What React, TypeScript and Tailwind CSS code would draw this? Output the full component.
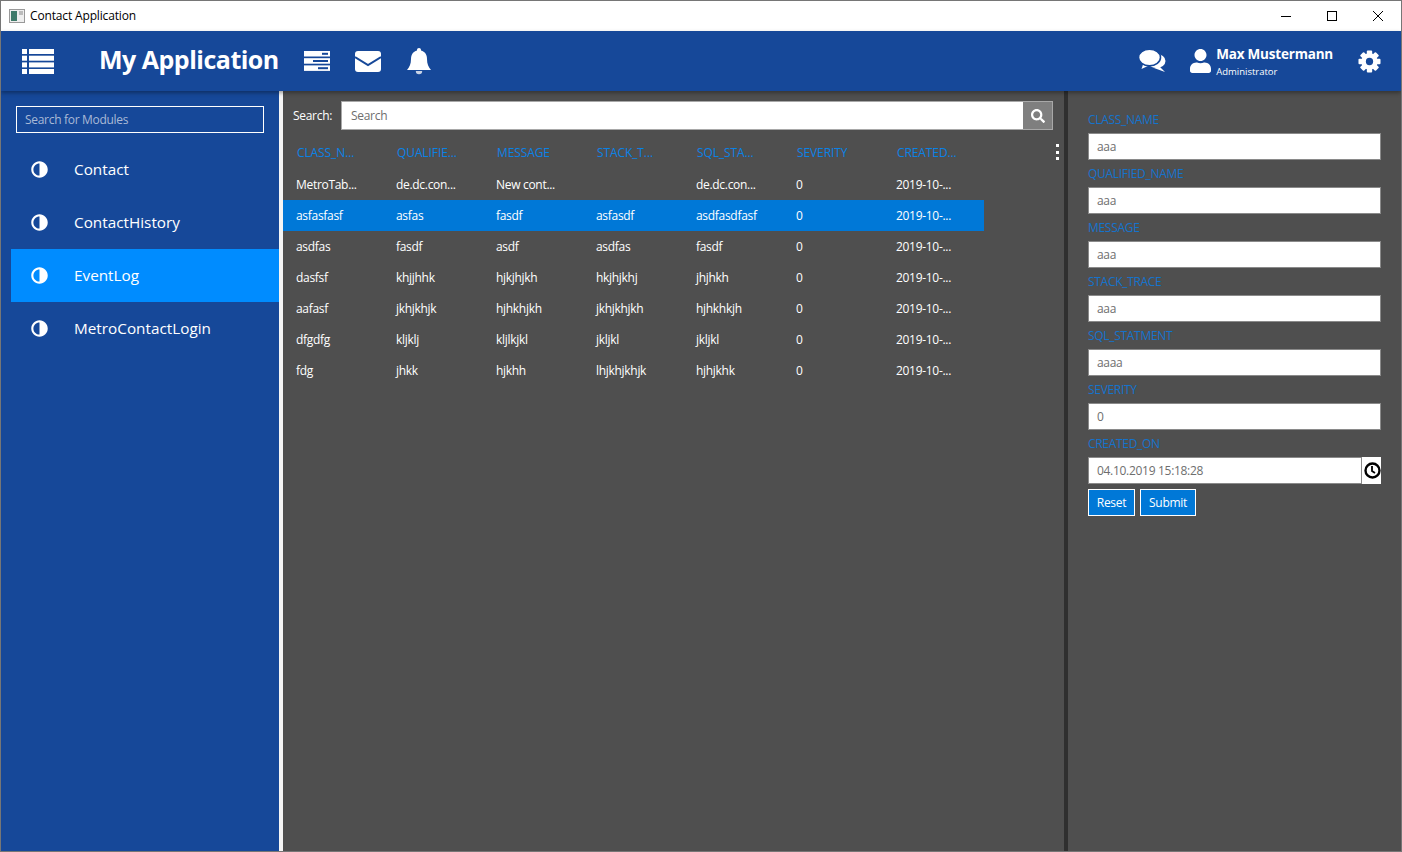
import { FaAdjust, FaSearch, FaUser } from 'react-icons/fa'

const modules = ['Contact', 'ContactHistory', 'EventLog', 'MetroContactLogin']

const columns = ['CLASS_N...', 'QUALIFIE...', 'MESSAGE', 'STACK_T...', 'SQL_STA...', 'SEVERITY', 'CREATED...']

const rows = [
    ['MetroTab...', 'de.dc.con...', 'New cont...', '', 'de.dc.con...', '0', '2019-10-...'],
    ['asfasfasf', 'asfas', 'fasdf', 'asfasdf', 'asdfasdfasf', '0', '2019-10-...'],
    ['asdfas', 'fasdf', 'asdf', 'asdfas', 'fasdf', '0', '2019-10-...'],
    ['dasfsf', 'khjjhhk', 'hjkjhjkh', 'hkjhjkhj', 'jhjhkh', '0', '2019-10-...'],
    ['aafasf', 'jkhjkhjk', 'hjhkhjkh', 'jkhjkhjkh', 'hjhkhkjh', '0', '2019-10-...'],
    ['dfgdfg', 'kljklj', 'kljlkjkl', 'jkljkl', 'jkljkl', '0', '2019-10-...'],
    ['fdg', 'jhkk', 'hjkhh', 'lhjkhjkhjk', 'hjhjkhk', '0', '2019-10-...'],
]

const fields = [
    { label: 'CLASS_NAME', value: 'aaa' },
    { label: 'QUALIFIED_NAME', value: 'aaa' },
    { label: 'MESSAGE', value: 'aaa' },
    { label: 'STACK_TRACE', value: 'aaa' },
    { label: 'SQL_STATMENT', value: 'aaaa' },
    { label: 'SEVERITY', value: '0' },
]

const HEADER_BLUE = '#164899'

const ListIcon = () => (
    <svg width="32" height="25" viewBox="0 0 32 25" fill="white" className="ml-[21px]">
        {[0, 6.7, 13.4, 20].map((y) => (
            <g key={y}>
                <rect x="0" y={y} width="5" height="5" />
                <rect x="7" y={y} width="25" height="5" />
            </g>
        ))}
    </svg>
)

const ServerIcon = () => (
    <svg width="26" height="20" viewBox="0 0 26 20" className="ml-[25px]">
        <rect x="0" y="0" width="26" height="5.5" fill="white" />
        <rect x="0" y="7.2" width="26" height="5.5" fill="white" />
        <rect x="0" y="14.4" width="26" height="5.5" fill="white" />
        <rect x="18" y="1.8" width="6" height="2" fill={HEADER_BLUE} />
        <rect x="9" y="9" width="15" height="2" fill={HEADER_BLUE} />
        <rect x="14" y="16.2" width="10" height="2" fill={HEADER_BLUE} />
    </svg>
)

const MailIcon = () => (
    <svg width="26" height="21" viewBox="0 0 26 21" className="ml-[25px]">
        <rect x="0" y="0" width="26" height="21" rx="3" fill="white" />
        <path d="M0 6 L13 14 L26 6" fill="none" stroke={HEADER_BLUE} strokeWidth="2" />
    </svg>
)

const BellIcon = () => (
    <svg width="24" height="27" viewBox="0 0 24 27" fill="white" className="ml-[26px]">
        <path d="M12 0c1.2 0 2 .9 2 2v.6C18 3.6 20 7 20 11c0 5 1.5 8 4 11H0c2.5-3 4-6 4-11 0-4 2-7.4 6-8.4V2c0-1.1.8-2 2-2z" />
        <path d="M8.8 23a3.2 3.2 0 0 0 6.4 0z" fill="#c9d3e6" />
    </svg>
)

const ChatIcon = () => (
    <svg width="27" height="24" viewBox="0 0 27 24" fill="white">
        <ellipse cx="17.5" cy="12" rx="9" ry="7" />
        <path d="M20 17 L26 23 L15 19z" />
        <path d="M4.5 14 L2.5 20 L11 16z" />
        <ellipse cx="10.5" cy="8.5" rx="11" ry="8.2" stroke={HEADER_BLUE} strokeWidth="1.6" />
    </svg>
)

const GearIcon = () => (
    <svg width="23" height="23" viewBox="0 0 24 24" fill="white" className="ml-[25px] mr-[20px]">
        {[0, 45, 90, 135].map((deg) => (
            <rect key={deg} x="9.2" y="0.5" width="5.6" height="23" rx="1" transform={`rotate(${deg} 12 12)`} />
        ))}
        <circle cx="12" cy="12" r="8.5" />
        <circle cx="12" cy="12" r="3.8" fill={HEADER_BLUE} />
    </svg>
)

const ClockIcon = () => (
    <svg width="17" height="17" viewBox="0 0 17 17" fill="none" stroke="black">
        <circle cx="8.5" cy="8.5" r="7" strokeWidth="2.4" />
        <path d="M8 4 V9 L11 11" strokeWidth="1.8" />
    </svg>
)

const App = () => {
    return (
        <div className="w-[1402px] h-[852px] flex flex-col overflow-hidden border border-[#767676] bg-white font-['Open_Sans','Noto_Sans',sans-serif] text-[12px] tracking-[-0.3px]">
            <div className="h-[30px] shrink-0 flex items-center bg-white text-black">
                <svg width="16" height="14" viewBox="0 0 16 14" className="ml-[8px] mr-[5px]">
                    <rect x="0.5" y="0.5" width="15" height="13" fill="#eee" stroke="#999" />
                    <rect x="2" y="2" width="6" height="10" fill="#3f7a6a" />
                    <rect x="10" y="2" width="4" height="4" fill="#bbb" />
                </svg>
                <span className="tracking-[-0.15px]">Contact Application</span>
                <div className="ml-auto flex items-center">
                    <div className="w-[46px] flex justify-center"><div className="w-[10px] h-px bg-black" /></div>
                    <div className="w-[46px] flex justify-center"><div className="w-[10px] h-[10px] border border-black" /></div>
                    <svg width="46" height="12" viewBox="0 0 46 12" stroke="black">
                        <path d="M18 1 L28 11 M28 1 L18 11" />
                    </svg>
                </div>
            </div>

            <div className="h-[60px] shrink-0 flex items-center bg-[#164899] text-white shadow-[0_2px_4px_rgba(0,0,0,0.35)] z-10">
                <ListIcon />
                <span className="ml-[45px] w-[180px] pb-[2px] text-[25px] font-bold tracking-[-0.5px] whitespace-nowrap">My Application</span>
                <ServerIcon />
                <MailIcon />
                <BellIcon />
                <div className="ml-auto flex items-center">
                    <ChatIcon />
                    <FaUser className="ml-[24px] w-[21px] h-[24px]" />
                    <div className="ml-[5px] mt-[2px] flex flex-col">
                        <span className="text-[13.5px] font-bold leading-[18px] tracking-[-0.2px]">Max Mustermann</span>
                        <span className="text-[9.5px] leading-[14px] mt-[2px] tracking-[0px]">Administrator</span>
                    </div>
                    <GearIcon />
                </div>
            </div>

            <div className="flex-1 flex min-h-0">
                <div className="w-[278px] shrink-0 bg-[#164899] text-white pt-[15px]">
                    <div className="ml-[15px] w-[248px] h-[27px] flex items-center border border-white pl-[8px] text-[#a9b9d6]">
                        Search for Modules
                    </div>
                    <div className="mt-[10px] flex flex-col">
                        {modules.map((name) => (
                            <div
                                key={name}
                                className={`h-[53px] flex items-center ml-[10px] pl-[20px] ${name === 'EventLog' ? 'bg-[#008cff]' : ''}`}
                            >
                                <FaAdjust className="w-[17px] h-[17px] scale-x-[-1]" />
                                <span className="ml-[26px] text-[15.3px] tracking-[0px]">{name}</span>
                            </div>
                        ))}
                    </div>
                </div>

                <div className="w-[4px] shrink-0 bg-[#f5f5f5]" />

                <div className="w-[781px] shrink-0 bg-[#4f4f4f] text-white relative">
                    <div className="h-[39px] pt-[10px] flex items-center">
                        <span className="ml-[10px] w-[48px]">Search:</span>
                        <div className="h-[29px] w-[712px] flex border border-[#a8a8a8] bg-white">
                            <span className="flex-1 pl-[9px] text-[#6e6e6e] leading-[27px]">Search</span>
                            <div className="w-[29px] flex items-center justify-center bg-[#7f7f7f]">
                                <FaSearch className="w-[14px] h-[14px] text-white" />
                            </div>
                        </div>
                    </div>
                    <div className="w-[701px] mt-[8px]">
                        <div className="h-[31px] pb-[1px] flex items-center text-[#0a82e6] tracking-[-0.1px]">
                            {columns.map((c) => (
                                <div key={c} className="w-[100px] pl-[14px]">{c}</div>
                            ))}
                        </div>
                        {rows.map((r, i) => (
                            <div key={i} className={`h-[31px] flex items-center ${i === 1 ? 'bg-[#0078d7]' : ''}`}>
                                {r.map((cell, j) => (
                                    <div key={j} className="w-[100px] pl-[13px] whitespace-nowrap">{cell}</div>
                                ))}
                            </div>
                        ))}
                    </div>
                    <div className="absolute left-[773px] top-[53px] flex flex-col gap-[3.5px]">
                        <div className="w-[3px] h-[3px] bg-white" />
                        <div className="w-[3px] h-[3px] bg-white" />
                        <div className="w-[3px] h-[3px] bg-white" />
                    </div>
                </div>

                <div className="w-[4px] shrink-0 bg-[#2f2f2f]" />

                <div className="flex-1 bg-[#4f4f4f] pt-[20px] pl-[20px] pr-[20px]">
                    {fields.map((f) => (
                        <div key={f.label}>
                            <div className="h-[18px] leading-[18px] text-[#1573cc]">{f.label}</div>
                            <div className="h-[27px] mt-[4px] mb-[5px] border border-[#8a8a8a] bg-white pl-[8px] leading-[25px] text-[#6e6e6e]">
                                {f.value}
                            </div>
                        </div>
                    ))}
                    <div className="h-[18px] leading-[18px] text-[#1573cc]">CREATED_ON</div>
                    <div className="h-[27px] mt-[4px] flex">
                        <div className="flex-1 border border-[#8a8a8a] bg-white pl-[8px] leading-[25px] text-[#6e6e6e]">04.10.2019 15:18:28</div>
                        <div className="w-[19px] flex items-center justify-end bg-white">
                            <ClockIcon />
                        </div>
                    </div>
                    <div className="mt-[5px] flex gap-[5px] text-white">
                        <div className="h-[27px] w-[47px] flex items-center justify-center border border-white bg-[#0078d7]">Reset</div>
                        <div className="h-[27px] w-[56px] flex items-center justify-center border border-white bg-[#0078d7]">Submit</div>
                    </div>
                </div>
            </div>
        </div>
    )
}
export default App
